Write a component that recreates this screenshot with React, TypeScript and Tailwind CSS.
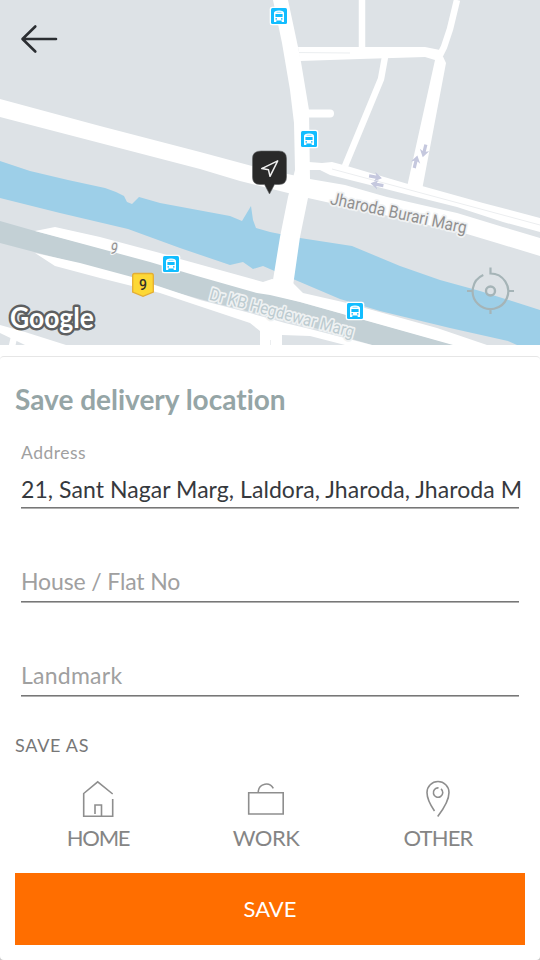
import type { ReactNode } from "react";

function BusStop({ x, y }: { x: number; y: number }) {
  return (
    <g transform={`translate(${x} ${y})`}>
      <rect x="-9.3" y="-9.3" width="18.6" height="18.6" rx="2.5" fill="#fff" />
      <rect x="-8" y="-8" width="16" height="16" rx="1.5" fill="#12bdff" />
      <path d="M-5 6V-3Q-5-5.500 0-5.500T5-3V6H2.700V4.500H-2.700V6Z" fill="#fff" />
      <path d="M-3.600-2H3.600V1H-3.600Z" fill="#12bdff" />
      <path d="M-2.500-3.700H2.500" stroke="#12bdff" strokeWidth=".5" />
      <circle cx="-2.800" cy="2.900" r=".8" fill="#12bdff" />
      <circle cx="2.800" cy="2.900" r=".8" fill="#12bdff" />
    </g>
  );
}

function DirectionArrow({ x, y, angle }: { x: number; y: number; angle: number }) {
  return (
    <path
      transform={`translate(${x} ${y}) rotate(${angle})`}
      d="M-6.500-1.600H0.500L-1-4.800L6.500 0L-1 4.800L0.500 1.600H-6.500Z"
      fill="#c5c8de"
    />
  );
}

function MapView() {
  return (
    <svg viewBox="0 0 540 345" className="block h-[345px] w-[540px]">
      <rect width="540" height="345" fill="#dde2e6" />
      <path
        d="M0 161L30 171L68 180L105 188L116 192L124 196L127 202L132 204L139 197L160 203L230 216L242 221L251 206L253 220L256 228L270 232L300 238L352 246L400 266L440 280L480 291L540 310V345H517L508 341L450 328L380 311L340 299L293 279L263 266L253 269L243 262L230 265L180 248L128 229L60 213L0 198Z"
        fill="#9dcfe8"
      />
      <path d="M0 221L35 231L155 262L270 294L300 302L455 345H372L315 328L215 303L155 287L80 264L0 243Z" fill="#c3d0d5" />
      <g fill="#fff">
        <path d="M35 231L55 227L100 237L160 253L180 259L263 282L272 279L293 283L303 293L347 303L437 328L487 345H453L300 302L270 295L257 293L197 276L150 262Z" />
        <path d="M35 253L80 263L132 277L155 285L200 300L250 313L285 323L310 329L372 345H345L310 336L282 335V345H260V331L250 323L160 293L132 286L100 278L55 266Z" />
        <path d="M0 99L100 126L200 152L252 166L310 179L345 185L387 197L457 213L503 227L540 238V256L497 243L467 234L380 214L308 198L288 193L240 181L200 169L100 143L0 117Z" />
        <path d="M273 0H288L298 47L301 62L309 110L310 180L308 198L300 237L293 286H272L280 237L288 197L295 170L294 123L290 90L282 43Z" />
        <path d="M309 162L322 163L332 162L347 166L408 184L422 186L483 203L540 218V232L503 222L457 207L417 197L370 185L330 175L320 170H309Z" />
        <path d="M298 47L425 47L440 50L446 63L422 190L407 187L435 60L425 57L360 59L300 61Z" />
        <path d="M0 325L25 332L66 345H25L0 333Z" />
      </g>
      <g fill="none" stroke="#fff" strokeLinejoin="round">
        <path d="M362 0V50" strokeWidth="6.5" />
        <path d="M457 0L450 29L444 47L440 55" strokeWidth="6.5" />
        <path d="M385 57L381 79L345 166" strokeWidth="6.5" />
        <path d="M306 113.5H330" strokeWidth="8" strokeLinecap="round" />
        <path d="M15 333L12 346" strokeWidth="6.5" />
      </g>
      <path d="M299 52.5L350 53" stroke="#eceff1" strokeWidth="1" />
      <path d="M332 169L540 225M270.500 340V345" stroke="#eceef0" strokeWidth="1" />

      <DirectionArrow x={375.5} y={177} angle={10} />
      <DirectionArrow x={377} y={184.5} angle={190} />
      <DirectionArrow x={415.8} y={161.7} angle={-76} />
      <DirectionArrow x={424.3} y={151} angle={104} />

      <g fontFamily="Roboto, sans-serif" strokeLinejoin="round" className="[paint-order:stroke]">
        <text transform="translate(329.5 204) rotate(12.3)" fontSize="17.200" textLength="139" lengthAdjust="spacingAndGlyphs" fill="#909090" stroke="#f0f2f3" strokeWidth="3.5">
          Jharoda Burari Marg
        </text>
        <text transform="translate(208.5 299.500) rotate(14.9)" fontSize="17" textLength="149" lengthAdjust="spacingAndGlyphs" fill="#bccbd0" stroke="#eff2f3" strokeWidth="3.5">
          Dr KB Hegdewar Marg
        </text>
        <text transform="translate(110 253.500) rotate(6)" fontSize="16" textLength="7" lengthAdjust="spacingAndGlyphs" fontStyle="italic" fill="#909090" stroke="#f4f5f6" strokeWidth="2.5">
          9
        </text>
      </g>

      <BusStop x={279} y={16} />
      <BusStop x={309} y={139} />
      <BusStop x={171} y={264} />
      <BusStop x={355} y={311} />

      <path d="M134.5 273.5H151.5Q153.3 273.5 153.3 275.5V292L143 296.3L132.7 292V275.5Q132.7 273.5 134.5 273.5Z" fill="#fdd835" stroke="#e4ad32" strokeWidth="1.3" />
      <text x="143" y="290" textAnchor="middle" fontFamily="Roboto, sans-serif" fontSize="14" fontWeight="500" fill="#33312a">9</text>

      <path d="M261 151H279Q286.500 151 286.500 158.500V177Q286.500 184.500 279 184.500H274.500L269.500 194L264.500 184.500H260Q252.500 184.500 252.500 177V158.500Q252.500 151 261 151Z" fill="#292929" stroke="#626567" strokeWidth=".6" />
      <path d="M277.700 160.800L261.700 168.600L268.500 169.800L270 176.300Z" fill="none" stroke="#eee" strokeWidth="1.5" strokeLinejoin="round" />

      <g fill="none" stroke="#a5b4b7" strokeWidth="2.200">
        <path d="M490.500 267.500V273.500A17.800 17.800 0 1 1 483.300 275M467 291H473M508 291H514M490.500 309V314" />
        <circle cx="490.500" cy="291" r="4.500" strokeWidth="2.400" />
      </g>

      <text x="10" y="328" textLength="84" lengthAdjust="spacingAndGlyphs" fontFamily="Lato, sans-serif" fontSize="28.500" fontWeight="700" fill="#fff" stroke="#5d5f61" strokeWidth="5" strokeLinejoin="round" className="[paint-order:stroke]">
        Google
      </text>
      <path d="M56 39H23M35.300 26.500L22.500 39L35.300 51.500" fill="none" stroke="#2b2e32" strokeWidth="2.600" strokeLinecap="round" strokeLinejoin="round" />
    </svg>
  );
}

function SaveOption({ label, className, children }: { label: string; className: string; children: ReactNode }) {
  return (
    <button className={`flex shrink-0 flex-col items-center text-[#858585] ${className}`}>
      <svg viewBox="0 0 40 40" className="h-10 w-10" fill="none" stroke="#8e8e8e" strokeWidth="1.6">
        {children}
      </svg>
      <span className="mt-[5px] text-[22px] leading-[28px]">{label}</span>
    </button>
  );
}

function Field({ text, className }: { text: string; className: string }) {
  return (
    <div className={`mx-[6px] mt-[59px] h-[35px] border-b border-[#777] text-[23px] leading-[29px] text-[#a0a0a0] shadow-[0_1px_0_#b0b0b0] ${className}`}>
      {text}
    </div>
  );
}

export default function App() {
  return (
    <main className="flex h-[960px] w-[540px] flex-col overflow-hidden bg-[linear-gradient(to_bottom,white_90%,#c8c8c8_90%)] font-[Lato,'Noto_Sans',sans-serif] [font-variant-ligatures:none]">
      <MapView />
      <section className="mt-[11px] flex h-[604px] flex-col rounded-[4px] border-t border-[#e6e6e6] bg-white px-[15px]">
        <h1 className="mt-[25px] text-[28px] leading-[34px] font-bold whitespace-nowrap text-[#95a5a6]">Save delivery location</h1>
        <div className="mx-[6px] mt-[26px] flex h-[66px] flex-col border-b border-[#777] whitespace-nowrap shadow-[0_1px_0_#b0b0b0]">
          <label className="text-[17.500px] leading-[22px] tracking-[0.5px] text-[#a0a0a0]">Address</label>
          <span className="mt-[11px] text-[23px] leading-[28px] tracking-[0.06px] text-[#36393e]">21, Sant Nagar Marg, Laldora, Jharoda, Jharoda M</span>
        </div>
        <Field text="House / Flat No" className="tracking-[-0.140px]" />
        <Field text="Landmark" className="tracking-[0.250px]" />
        <h2 className="mt-[37px] text-[18px] leading-[24px] tracking-[0.7px] text-[#777]">SAVE AS</h2>
        <div className="-ml-[2px] mt-[22px] flex">
          <SaveOption label="HOME" className="w-[170px] tracking-[-1.300px]">
            <path d="M34.700 15L19.700 2.800L5.700 14.500V37.300H34.700V20M17 35V26H23.500V37" />
          </SaveOption>
          <SaveOption label="WORK" className="w-[166px] tracking-[-0.500px]">
            <path d="M2.700 13.700H37.200V35H2.700ZM12.300 13.700V12A8 8 0 0 1 27.300 9.300" />
          </SaveOption>
          <SaveOption label="OTHER" className="w-[178px] tracking-[-0.800px]">
            <path d="M16.500 32C11 24 9 19 9 13.500A11 11 0 0 1 31 13.500C31 20 27 28 19.700 37.500" />
            <path d="M20.500 8.900A4.700 4.700 0 1 0 23 9.900" />
          </SaveOption>
        </div>
        <button className="mt-[21px] h-[72px] shrink-0 bg-[#ff6e00] text-[22px] leading-[72px] text-white">SAVE</button>
      </section>
    </main>
  );
}
